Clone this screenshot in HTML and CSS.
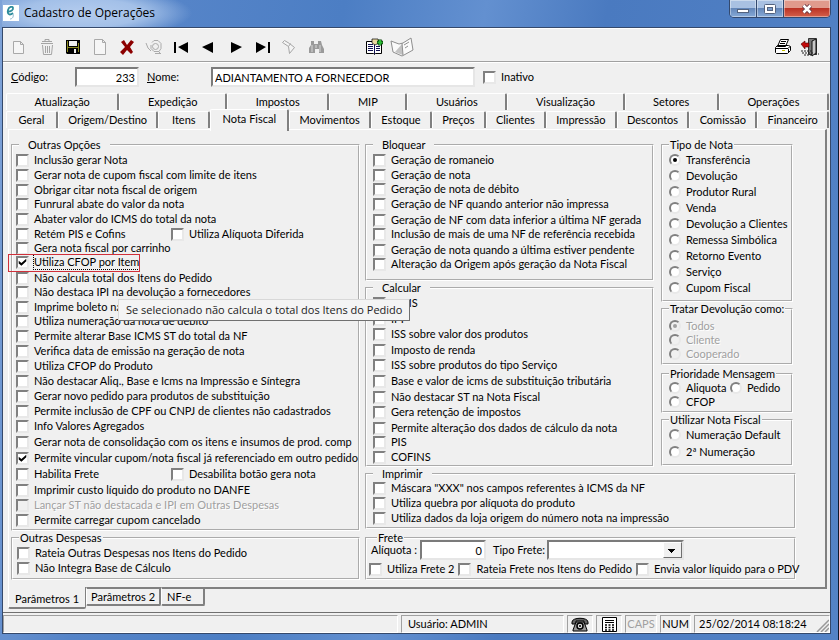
FILE: index.html
```html
<!DOCTYPE html>
<html lang="pt-BR">
<head>
<meta charset="utf-8">
<title>Cadastro de Operações</title>
<link rel="stylesheet" href="styles.css">
</head>
<body>
<div class="window">
  <header class="titlebar">
    <svg class="app-icon" viewBox="0 0 16 16"><rect width="16" height="16" fill="#fff"/><path d="M5 6.500C8 6.500 10.500 5 10 2.800C9.500 1 6 1.500 5 5C4 9 6.500 11 10 8" fill="none" stroke="#2e8c9c" stroke-width="1.800"/><path d="M10 9c1 3-1 5-3 5" fill="none" stroke="#8fb6cc" stroke-width="1"/></svg>
    <h1>Cadastro de Operações</h1>
    <div class="caption-buttons">
      <button type="button" class="min" aria-label="Minimizar"><svg width="14" height="12"><rect x="1.500" y="6.500" width="11" height="3" fill="#fff" stroke="#53637f"/></svg></button>
      <button type="button" class="max" aria-label="Maximizar"><svg width="14" height="12"><rect x="1.500" y="1.500" width="11" height="9" rx="1" fill="#fff" stroke="#53637f"/><rect x="4.500" y="4.500" width="5" height="3" fill="#7d9ecb" stroke="#53637f"/></svg></button>
      <button type="button" class="close" aria-label="Fechar"><svg width="14" height="12"><path d="M3.500 2.500L10.500 9.500M10.500 2.500L3.500 9.500" stroke="#6b3a44" stroke-width="4.500"/><path d="M3.500 2.500L10.500 9.500M10.500 2.500L3.500 9.500" stroke="#fff" stroke-width="2.500"/></svg></button>
    </div>
  </header>

  <main class="client">
    <div class="toolbar">
      <button type="button" aria-label="Novo"><svg width="18" height="18"><path d="M3.500 3.500h7l3 3v9h-10zM10.500 3.500v3h3" fill="#f6f6f6" stroke="#a9a9a9"/></svg></button>
      <button type="button" aria-label="Excluir"><svg width="18" height="18"><path d="M4 5.500h12M5 3.500h10M8 3.500v-2h4v2M5.500 7l1 9.500h8l1-9.500M8.500 8v7M10.500 8v7M12.500 8v7" fill="none" stroke="#a5a5a5"/></svg></button>
      <button type="button" aria-label="Salvar"><svg width="18" height="18"><path d="M2 2h14v14H3l-1-1z" fill="#000"/><path d="M3 3h1v11h-1zM14 5h1v9h-1zM4 9h10v1H4z" fill="#8a8a20"/><path d="M5 3h8v5H5z" fill="#efefef"/><path d="M6 11h6v4H6z" fill="#000"/><path d="M10 11h2v4h-2z" fill="#efefef"/></svg></button>
      <button type="button" aria-label="Documento"><svg width="18" height="18"><path d="M3.500 1.500h8l3 3v12h-11zM11.500 1.500v3h3" fill="#f6f6f6" stroke="#a9a9a9"/></svg></button>
      <button type="button" aria-label="Cancelar"><svg width="18" height="18"><path d="M3 4l3-2 3 5 4-5 3 2-4 5 3 5-2 2-4-4-4 5-3-3 5-5z" fill="#8c0000"/></svg></button>
      <button type="button" aria-label="Localizar"><svg width="18" height="18"><circle cx="10.500" cy="8.500" r="3" fill="none" stroke="#aaa"/><path d="M7 4.500l2-2h4l3 3v5l-2 3h-5l-3-3V7M1 5l2 5 3 3M13 13l3 3M10 15.500h6" fill="none" stroke="#aaa"/></svg></button>
      <button type="button" aria-label="Primeiro"><svg width="18" height="18"><path d="M2 4h2v11H2zM6 9l10-5v11z" fill="#000"/></svg></button>
      <button type="button" aria-label="Anterior"><svg width="18" height="18"><path d="M3 9l11-5v11z" fill="#000"/></svg></button>
      <button type="button" aria-label="Próximo"><svg width="18" height="18"><path d="M16 9L5 4v11z" fill="#000"/></svg></button>
      <button type="button" aria-label="Último"><svg width="18" height="18"><path d="M15 4h2v11h-2zM13 9L3 4v11z" fill="#000"/></svg></button>
      <button type="button" aria-label="Filtrar"><svg width="18" height="18"><path d="M2.500 4.500l2-2 5 3 5 4-5 6-1-7zM8.500 8.500l2-3" fill="#f4f4f4" stroke="#a5a5a5"/></svg></button>
      <button type="button" aria-label="Pesquisar"><svg width="18" height="18"><path d="M4 3h3v3h4V3h3l1 4 2 4v4h-5v-4H8v4H2v-5l2-3z" fill="#9a9a9a"/><path d="M5 7v7M13 7v7M9 7v3" stroke="#d8d8d8"/></svg></button>
      <button type="button" class="group-start" aria-label="Adicionar lista"><svg width="20" height="18"><path d="M1.500 3.500h7l1 1 1-1h6v12h-6l-1 1-1-1h-7z" fill="#fff" stroke="#000"/><path d="M9.500 4v12M3 6.500h5M3 8.500h5M3 10.500h5M3 12.500h5M11 8.500h4M11 10.500h4M11 12.500h4" stroke="#101050"/><path d="M7 1h6l1 4-4 2-3-2z" fill="#ead9a0" stroke="#000" stroke-width=".7"/><path d="M12 4.500h6M15 1.500v6" stroke="#063c06" stroke-width="3.500"/><path d="M12.500 4.500h5M15 2v5" stroke="#2dbb35" stroke-width="2"/></svg></button>
      <button type="button" aria-label="Manual"><svg width="24" height="20"><path d="M1 4l8 3 4-1 8-5 2 12-9 5-2 1-9-4z" fill="#fafafa" stroke="#8e8e8e"/><path d="M12 7l1 11-3-1-5-2z" fill="#c3c3c3"/><path d="M14 8l5-3M15 11l3-2M12 6l1 12" fill="none" stroke="#909090"/></svg></button>
      <span class="spacer"></span>
      <button type="button" aria-label="Imprimir"><svg width="18" height="18"><path d="M6.500 1.500h8l-3 7h-8zM1.500 9.500l2-2h11l2 1v4l-3 3h-11l-1-1z" fill="#fff" stroke="#000"/><path d="M7 3.500h5M6 5.500h5M2 10.500h12l2-2M14.500 11v3" fill="none" stroke="#000"/><path d="M8 12h3v1H8z" fill="#c5bd00"/></svg></button>
      <button type="button" aria-label="Sair"><svg width="20" height="20"><path d="M8.500 1.500h8v16h-8z" fill="#777" stroke="#333"/><path d="M12 4l4-2v14l-4 3z" fill="#c8c8c8" stroke="#111"/><path d="M1 7l4-3v2h4v4H5v2z" fill="#c30b0b" stroke="#400" stroke-width=".6"/><path d="M1 14h11M2 16h12M4 18h8M15 17h4" stroke="#222" stroke-dasharray="2 1"/></svg></button>
    </div>

    <div class="identity">
      <label class="code-label" for="codigo"><u>C</u>ódigo:</label>
      <input class="text code" id="codigo" value="233">
      <label class="name-label" for="nome"><u>N</u>ome:</label>
      <input class="text name" id="nome" value="ADIANTAMENTO A FORNECEDOR">
      <label class="opt"><input type="checkbox">Inativo</label>
    </div>

    <nav class="tabs">
      <div class="tab-row">
        <button type="button">Atualização</button><button type="button">Expedição</button><button type="button">Impostos</button><button type="button">MIP</button><button type="button">Usuários</button><button type="button">Visualização</button><button type="button">Setores</button><button type="button">Operações</button>
      </div>
      <div class="tab-row">
        <button type="button">Geral</button><button type="button">Origem/Destino</button><button type="button">Itens</button><button type="button" class="current">Nota Fiscal</button><button type="button">Movimentos</button><button type="button">Estoque</button><button type="button">Preços</button><button type="button">Clientes</button><button type="button">Impressão</button><button type="button">Descontos</button><button type="button">Comissão</button><button type="button">Financeiro</button>
      </div>
    </nav>

    <section class="page">
      <div class="column">
        <fieldset class="outras">
          <legend class="wide">Outras Opções</legend>
          <div class="rows rows-outras">
            <label class="opt"><input type="checkbox">Inclusão gerar Nota</label>
            <label class="opt"><input type="checkbox">Gerar nota de cupom fiscal com limite de itens</label>
            <label class="opt"><input type="checkbox">Obrigar citar nota fiscal de origem</label>
            <label class="opt"><input type="checkbox">Funrural abate do valor da nota</label>
            <label class="opt"><input type="checkbox">Abater valor do ICMS do total da nota</label>
            <div class="pair"><label class="opt"><input type="checkbox">Retém PIS e Cofins</label><label class="opt"><input type="checkbox">Utiliza Alíquota Diferida</label></div>
            <label class="opt"><input type="checkbox">Gera nota fiscal por carrinho</label>
            <div class="marked"><label class="opt"><input type="checkbox" checked><span class="focus">Utiliza CFOP por Item</span></label><span class="highlight"></span><span class="tooltip" role="tooltip">Se selecionado não calcula o total dos Itens do Pedido</span></div>
            <label class="opt"><input type="checkbox">Não calcula total dos Itens do Pedido</label>
            <label class="opt"><input type="checkbox">Não destaca IPI na devolução a fornecedores</label>
            <label class="opt"><input type="checkbox">Imprime boleto na</label>
            <label class="opt"><input type="checkbox">Utiliza numeração da nota de débito</label>
            <label class="opt"><input type="checkbox">Permite alterar Base ICMS ST do total da NF</label>
            <label class="opt"><input type="checkbox">Verifica data de emissão na geração de nota</label>
            <label class="opt"><input type="checkbox">Utiliza CFOP do Produto</label>
            <label class="opt"><input type="checkbox">Não destacar Aliq., Base e Icms na Impressão e Síntegra</label>
            <label class="opt"><input type="checkbox">Gerar novo pedido para produtos de substituição</label>
            <label class="opt"><input type="checkbox">Permite inclusão de CPF ou CNPJ de clientes não cadastrados</label>
            <label class="opt"><input type="checkbox">Info Valores Agregados</label>
            <label class="opt"><input type="checkbox">Gerar nota de consolidação com os itens e insumos de prod. comp</label>
            <label class="opt"><input type="checkbox" checked>Permite vincular cupom/nota fiscal já referenciado em outro pedido</label>
            <div class="pair"><label class="opt"><input type="checkbox">Habilita Frete</label><label class="opt"><input type="checkbox">Desabilita botão gera nota</label></div>
            <label class="opt"><input type="checkbox">Imprimir custo líquido do produto no DANFE</label>
            <label class="opt disabled"><input type="checkbox" disabled>Lançar ST não destacada e IPI em Outras Despesas</label>
            <label class="opt"><input type="checkbox">Permite carregar cupom cancelado</label>
          </div>
        </fieldset>
        <fieldset class="despesas">
          <legend>Outras Despesas</legend>
          <div class="rows rows-15">
            <label class="opt"><input type="checkbox">Rateia Outras Despesas nos Itens do Pedido</label>
            <label class="opt"><input type="checkbox">Não Integra Base de Cálculo</label>
          </div>
        </fieldset>
      </div>

      <div class="column side">
        <div class="upper">
          <div class="column">
            <fieldset class="inset bloquear">
              <legend class="wide">Bloquear</legend>
              <div class="rows rows-bloquear">
                <label class="opt"><input type="checkbox">Geração de romaneio</label>
                <label class="opt"><input type="checkbox">Geração de nota</label>
                <label class="opt"><input type="checkbox">Geração de nota de débito</label>
                <label class="opt"><input type="checkbox">Geração de NF quando anterior não impressa</label>
                <label class="opt"><input type="checkbox">Geração de NF com data inferior a última NF gerada</label>
                <label class="opt"><input type="checkbox">Inclusão de mais de uma NF de referência recebida</label>
                <label class="opt"><input type="checkbox">Geração de nota quando a última estiver pendente</label>
                <label class="opt"><input type="checkbox">Alteração da Origem após geração da Nota Fiscal</label>
              </div>
            </fieldset>
            <fieldset class="inset calcular">
              <legend class="wide">Calcular</legend>
              <div class="rows rows-calcular">
                <label class="opt"><input type="checkbox">ICMS</label>
                <label class="opt"><input type="checkbox">IPI</label>
                <label class="opt"><input type="checkbox">ISS sobre valor dos produtos</label>
                <label class="opt"><input type="checkbox">Imposto de renda</label>
                <label class="opt"><input type="checkbox">ISS sobre produtos do tipo Serviço</label>
                <label class="opt"><input type="checkbox">Base e valor de icms de substituição tributária</label>
                <label class="opt"><input type="checkbox">Não destacar ST na Nota Fiscal</label>
                <label class="opt"><input type="checkbox">Gera retenção de impostos</label>
                <label class="opt"><input type="checkbox">Permite alteração dos dados de cálculo da nota</label>
                <label class="opt"><input type="checkbox">PIS</label>
                <label class="opt"><input type="checkbox">COFINS</label>
              </div>
            </fieldset>
          </div>
          <div class="column radios">
            <fieldset class="inset tipo">
              <legend>Tipo de Nota</legend>
              <div class="rows rows-16">
                <label class="opt"><input type="radio" name="tipo" checked>Transferência</label>
                <label class="opt"><input type="radio" name="tipo">Devolução</label>
                <label class="opt"><input type="radio" name="tipo">Produtor Rural</label>
                <label class="opt"><input type="radio" name="tipo">Venda</label>
                <label class="opt"><input type="radio" name="tipo">Devolução a Clientes</label>
                <label class="opt"><input type="radio" name="tipo">Remessa Simbólica</label>
                <label class="opt"><input type="radio" name="tipo">Retorno Evento</label>
                <label class="opt"><input type="radio" name="tipo">Serviço</label>
                <label class="opt"><input type="radio" name="tipo">Cupom Fiscal</label>
              </div>
            </fieldset>
            <fieldset class="inset tratar">
              <legend>Tratar Devolução como:</legend>
              <div class="rows rows-14">
                <label class="opt disabled"><input type="radio" name="tratar" checked disabled>Todos</label>
                <label class="opt disabled"><input type="radio" name="tratar" disabled>Cliente</label>
                <label class="opt disabled"><input type="radio" name="tratar" disabled>Cooperado</label>
              </div>
            </fieldset>
            <fieldset class="inset prioridade">
              <legend>Prioridade Mensagem</legend>
              <div class="rows rows-14">
                <div class="pair"><label class="opt"><input type="radio" name="prioridade">Aliquota</label><label class="opt"><input type="radio" name="prioridade">Pedido</label></div>
                <label class="opt"><input type="radio" name="prioridade">CFOP</label>
              </div>
            </fieldset>
            <fieldset class="inset utilizar">
              <legend>Utilizar Nota Fiscal</legend>
              <div class="rows rows-17">
                <label class="opt"><input type="radio" name="numeracao">Numeração Default</label>
                <label class="opt"><input type="radio" name="numeracao">2ª Numeração</label>
              </div>
            </fieldset>
          </div>
        </div>
        <fieldset class="inset imprimir">
          <legend class="wide">Imprimir</legend>
          <div class="rows rows-15">
            <label class="opt"><input type="checkbox">Máscara "XXX" nos campos referentes à ICMS da NF</label>
            <label class="opt"><input type="checkbox">Utiliza quebra por alíquota do produto</label>
            <label class="opt"><input type="checkbox">Utiliza dados da loja origem do número nota na impressão</label>
          </div>
        </fieldset>
        <fieldset class="frete">
          <legend>Frete</legend>
          <div class="frete-fields">
            <label class="aliquota-label" for="aliquota">Alíquota :</label>
            <input class="text aliquota" id="aliquota" value="0">
            <label class="tipo-frete" for="tipofrete">Tipo Frete:</label>
            <span class="combo"><select id="tipofrete"><option></option></select></span>
          </div>
          <div class="frete-options">
            <label class="opt"><input type="checkbox">Utiliza Frete 2</label>
            <label class="opt"><input type="checkbox">Rateia Frete nos Itens do Pedido</label>
            <label class="opt"><input type="checkbox">Envia valor líquido para o PDV</label>
          </div>
        </fieldset>
      </div>
    </section>

    <nav class="bottom-tabs">
      <button type="button" class="current">Parâmetros 1</button><button type="button">Parâmetros 2</button><button type="button">NF-e</button>
    </nav>

    <footer class="statusbar">
      <span class="cell fill"></span>
      <span class="cell user">Usuário: ADMIN</span>
      <span class="cell icon"><svg width="18" height="15"><path d="M1 5C1 0 17 0 17 5v2h-4V4H5v3H1z" fill="#666" stroke="#000"/><path d="M5 5h8l3 8v1H2v-1z" fill="#999" stroke="#000"/><circle cx="9" cy="9" r="3" fill="#ddd" stroke="#000" stroke-width="1.500"/><circle cx="9" cy="9" r="1"/></svg></span>
      <span class="cell icon"><svg width="15" height="15"><path d="M.5.500h14v14H.5z" fill="#fff" stroke="#000"/><path d="M3 3.500h9M3 5.500h9" stroke="#000"/><path d="M3 8h9M3 10.500h9M3 13h9" stroke="#000" stroke-width="1.500" stroke-dasharray="2 1.500"/></svg></span>
      <span class="cell caps">CAPS</span>
      <span class="cell num">NUM</span>
      <span class="cell date">25/02/2014 08:18:24<svg class="grip" width="13" height="13"><path d="M1 13L13 1M5 13l8-8M9 13l4-4" stroke="#999" stroke-width="1.500"/></svg></span>
    </footer>
  </main>
</div>
</body>
</html>
```
FILE: styles.css
```css
* { box-sizing: border-box; }

body {
  margin: 0;
  font: 11px/14px Lato, "Liberation Sans", Arial, sans-serif;
  color: #000;
}

button, input, select { font: inherit; color: inherit; }
button { padding: 0; }

.window {
  display: flex;
  flex-direction: column;
  min-height: 100vh;
  padding: 0 7px 7px 2px;
  background: linear-gradient(100deg, #7fa3d8 0, #5584c8 180px, #4c7ec4 340px, #6390d0 480px, #4a7ac0 600px, #5483c6 100%);
  border-right: 1px solid #10182c;
  border-bottom: 1px solid #10182c;
}

/* Title bar */
.titlebar {
  display: flex;
  align-items: flex-start;
  height: 27px;
  background: radial-gradient(ellipse 110px 26px at 80px 13px, #b4ccee 0, #a3c0e8 55%, transparent 100%);
}
.app-icon { width: 16px; height: 16px; margin: 5px 5px 0 1px; }
h1 {
  flex: 1;
  margin: 0;
  padding-top: 4px;
  font: 12px/18px "Open Sans", "Noto Sans", sans-serif;
}
.caption-buttons {
  display: flex;
  height: 18px;
  border: 1px solid #33496e;
  border-top: 0;
  border-radius: 0 0 5px 5px;
  overflow: hidden;
}
.caption-buttons button {
  display: grid;
  place-items: center;
  width: 27px;
  border: 0;
  border-right: 1px solid #33496e;
  background: linear-gradient(#a9c1e2 0 45%, #6487b9 50%, #86aad8);
  box-shadow: inset 0 0 0 1px #ffffff66;
}
.caption-buttons .close {
  width: 46px;
  border-right: 0;
  background: linear-gradient(#e09a8c 0 45%, #bb3325 50%, #d4604a);
}

/* Client area */
.client {
  flex: 1;
  display: flex;
  flex-direction: column;
  background: #f0f0f0;
  border: 1px solid #35496b;
}
.toolbar {
  display: flex;
  align-items: center;
  height: 34px;
  padding: 3px 7px 0 2px;
  border-top: 1px solid #fff;
  border-bottom: 1px solid #a0a0a0;
}
.toolbar button {
  display: grid;
  place-items: center;
  width: 27px;
  height: 27px;
  border: 0;
  background: none;
}
.toolbar .group-start { margin-left: 32px; }
.spacer { flex: 1; }

.identity {
  display: flex;
  align-items: center;
  padding: 4px 8px 6px;
  border-top: 1px solid #fff;
}
.code-label { width: 64px; }
.name-label { width: 72px; padding-left: 8px; }
.text {
  height: 20px;
  padding: 0 2px;
  background: #fff;
  border: 2px solid;
  border-color: #7b7b7b #e6e6e6 #e6e6e6 #7b7b7b;
  border-radius: 0;
}
.code { width: 64px; text-align: right; }
.name { flex: 0 1 264px; margin-right: 8px; }

/* Tabs */
.tabs { padding: 0 1px 0 3px; }
.tab-row { display: flex; height: 18px; }
.tab-row button {
  flex: 1 1 auto;
  min-width: 52px;
  height: 17px;
  border: 0;
  border-top: 1px solid #fff;
  border-left: 1px solid #fff;
  border-right: 2px solid #808080;
  border-radius: 2px 2px 0 0;
  background: #f0f0f0;
}
.tab-row .current {
  height: 22px;
  margin-top: -2px;
  padding: 0 2px 4px;
  z-index: 1;
}

.page {
  flex: 1;
  display: grid;
  grid-template-columns: minmax(0, 349fr) minmax(0, 431fr);
  gap: 5px;
  margin: 0 3px 0 5px;
  padding: 8px 29px 7px 2px;
  border: 1px solid #fff;
  border-right: 2px solid #808080;
  border-bottom: 0;
}
.column { display: flex; flex-direction: column; min-width: 0; }
.upper {
  display: grid;
  grid-template-columns: minmax(0, 289fr) minmax(0, 132fr);
  gap: 7px;
  padding-right: 3px;
}

fieldset {
  min-width: 0;
  margin: 0;
  padding: 1px 0 1px 3px;
  border: 2px groove #fff;
}
fieldset.inset { padding-left: 6px; }
legend { height: 14px; margin-left: 3px; padding: 0 1px; white-space: nowrap; }
legend.wide { padding: 0 9px; }
.inset legend { margin-left: 0; }

.despesas { padding-bottom: 2px; }
.despesas .rows { padding-left: 1px; }
.bloquear { padding-bottom: 7px; }
.tipo { padding-bottom: 3px; }
.tratar { padding: 3px 0 2px; }
.prioridade { padding: 0 0 2px; margin-top: 2px; }
.utilizar { padding-bottom: 2px; }
.imprimir { padding: 0 0 1px; }

.rows { display: grid; align-items: start; }
.rows-14 { grid-auto-rows: 14px; }
.rows-15 { grid-auto-rows: 15px; }
.rows-16 { grid-auto-rows: 16px; }
.rows-17 { grid-auto-rows: 17px; }
.rows-outras { grid-template-rows: 15px 15px 14px 15px 15px 14px 14px 16px 14px 15px 14px repeat(7, 15px) repeat(4, 16px) repeat(3, 15px); }
.rows-bloquear { grid-template-rows: 15px 14px 15px 16px 14px 16px 14px 15px; }
.rows-calcular { grid-template-rows: 16px 15px 16px 15px 16px 16px 15px 16px 14px 15px 14px; }

.opt { display: flex; align-items: center; gap: 5px; height: 14px; white-space: nowrap; }
.pair { display: flex; }
.pair .opt:first-child { width: 155px; }
.radios .pair .opt:first-child { width: 61px; }
.disabled { color: #a0a0a0; text-shadow: 1px 1px #fff; }

input[type="checkbox"], input[type="radio"] {
  appearance: none;
  display: grid;
  place-items: center;
  flex: none;
  width: 13px;
  height: 13px;
  margin: 0;
  background: #fff;
  border: 2px solid;
  border-color: #808080 #e8e8e8 #e8e8e8 #808080;
}
input[type="radio"] {
  width: 12px;
  height: 12px;
  border-radius: 50%;
}
input:disabled { background: #f0f0f0; }
input[type="checkbox"]:checked::before {
  content: "";
  width: 9px;
  height: 8px;
  background: #000;
  clip-path: polygon(8% 35%, 38% 62%, 92% 8%, 92% 42%, 38% 96%, 8% 70%);
}
input[type="radio"]:checked::before {
  content: "";
  width: 4px;
  height: 4px;
  border-radius: 50%;
  background: currentColor;
}

.marked { position: relative; z-index: 5; }
.focus { outline: 1px dotted #000; }
.highlight {
  position: absolute;
  top: -1px;
  left: -8px;
  width: 132px;
  height: 18px;
  border: 1px solid #d0303a;
}
.tooltip {
  position: absolute;
  top: 44px;
  left: 102px;
  padding: 1px 7px;
  font: 11px/18px "Open Sans", "Noto Sans", sans-serif;
  color: #222;
  white-space: nowrap;
  background: #f4f4f4;
  border: 1px solid #d8d8d8;
  border-right-color: #707070;
  border-bottom-color: #707070;
}

/* Freight */
.frete { margin-top: 2px; padding: 0 0 2px 2px; }
.frete legend { margin-left: 8px; }
.frete-fields { display: flex; align-items: center; margin-top: -5px; padding-left: 2px; }
.aliquota-label { width: 49px; }
.aliquota { width: 66px; text-align: right; }
.tipo-frete { width: 54px; margin-left: 7px; }
.combo { position: relative; flex: 0 1 137px; }
.combo::after {
  content: "";
  position: absolute;
  inset: 2px 2px 2px auto;
  width: 17px;
  background: linear-gradient(#000, #000) 4px 6px / 7px 1px no-repeat, linear-gradient(#000, #000) 5px 7px / 5px 1px no-repeat, linear-gradient(#000, #000) 6px 8px / 3px 1px no-repeat, linear-gradient(#000, #000) 7px 9px / 1px 1px no-repeat, #f0f0f0;
  border: 1px solid;
  border-color: #fff #707070 #707070 #fff;
  pointer-events: none;
}
.combo select {
  appearance: none;
  display: block;
  width: 100%;
  height: 20px;
  background: #fff;
  border: 2px solid;
  border-color: #7b7b7b #e6e6e6 #e6e6e6 #7b7b7b;
  border-radius: 0;
}
.frete-options { display: flex; gap: 4px; padding-top: 2px; }

/* Bottom tabs */
.bottom-tabs { display: flex; align-items: flex-start; height: 25px; padding-left: 5px; margin-right: 3px; }
.bottom-tabs::after { content: ""; flex: 1; border-top: 2px solid #808080; }
.bottom-tabs button {
  height: 19px;
  padding: 1px 4px 0;
  background: #f0f0f0;
  border: 0;
  border-top: 2px solid #808080;
  border-left: 1px solid #fff;
  border-right: 2px solid #808080;
  border-bottom: 2px solid #808080;
  border-radius: 0 0 2px 2px;
}
.bottom-tabs .current { height: 22px; padding: 4px 6px 0; border-top: 0; border-right-width: 1px; }
.bottom-tabs button:last-of-type { padding: 1px 12px 0 5px; }

/* Status bar */
.statusbar { display: flex; gap: 3px; padding-top: 2px; border-top: 1px solid #707070; }
.cell {
  display: flex;
  align-items: center;
  height: 18px;
  border: 1px solid;
  border-color: #a0a0a0 #fff #fff #a0a0a0;
}
.fill { flex: 1; }
.user { width: 163px; padding-left: 6px; }
.icon { width: 26px; justify-content: center; }
.caps { width: 32px; justify-content: center; color: #a0a0a0; }
.num { width: 31px; justify-content: center; }
.date { width: 136px; padding-left: 4px; justify-content: space-between; }
.grip { align-self: flex-end; }
```
